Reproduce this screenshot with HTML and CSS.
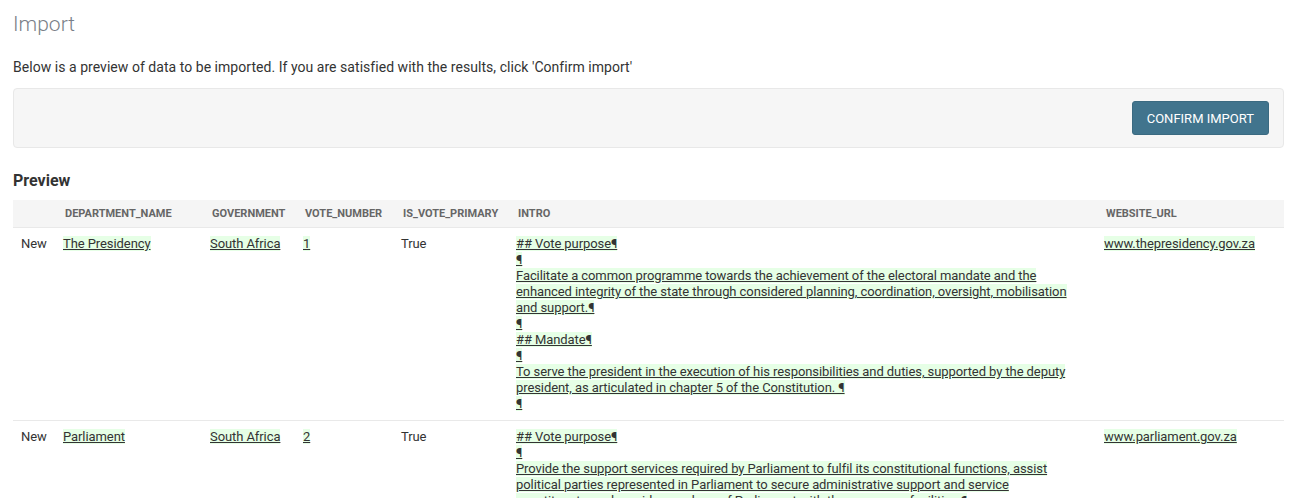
FILE: index.html
```html
<!DOCTYPE html>
<html>
<head>
<meta charset="utf-8">
<link rel="stylesheet" href="styles.css">
</head>
<body>
<div class="page">
  <h1 class="title">Import</h1>
  <p class="lead">Below is a preview of data to be imported. If you are satisfied with the results, click 'Confirm import'</p>
  <div class="well">
    <button class="btn">Confirm import</button>
  </div>
  <h3 class="section">Preview</h3>
  <table class="preview">
    <colgroup>
      <col class="c-status">
      <col class="c-dept">
      <col class="c-gov">
      <col class="c-vote">
      <col class="c-primary">
      <col class="c-intro">
      <col class="c-url">
    </colgroup>
    <thead>
      <tr>
        <th></th>
        <th>department_name</th>
        <th>government</th>
        <th>vote_number</th>
        <th>is_vote_primary</th>
        <th>intro</th>
        <th>website_url</th>
      </tr>
    </thead>
    <tbody>
      <tr>
        <td>New</td>
        <td><ins>The Presidency</ins></td>
        <td><ins>South Africa</ins></td>
        <td><ins>1</ins></td>
        <td>True</td>
        <td class="intro"><ins>## Vote purpose¶</ins><br><ins>¶</ins><br><ins>Facilitate a common programme towards the achievement of the electoral mandate and the enhanced integrity of the state through considered planning, coordination, oversight, mobilisation and support.¶</ins><br><ins>¶</ins><br><ins>## Mandate¶</ins><br><ins>¶</ins><br><ins>To serve the president in the execution of his responsibilities and duties, supported by the deputy president, as articulated in chapter 5 of the Constitution. ¶</ins><br><ins>¶</ins></td>
        <td><ins>www.thepresidency.gov.za</ins></td>
      </tr>
      <tr>
        <td>New</td>
        <td><ins>Parliament</ins></td>
        <td><ins>South Africa</ins></td>
        <td><ins>2</ins></td>
        <td>True</td>
        <td class="intro"><ins>## Vote purpose¶</ins><br><ins>¶</ins><br><ins>Provide the support services required by Parliament to fulfil its constitutional functions, assist political parties represented in Parliament to secure administrative support and service constituents, and provide members of Parliament with the necessary facilities.¶</ins><br><ins>¶</ins><br><ins>## Mandate¶</ins><br><ins>¶</ins></td>
        <td><ins>www.parliament.gov.za</ins></td>
      </tr>
    </tbody>
  </table>
</div>
</body>
</html>
```

FILE: styles.css
```css
html, body {
  margin: 0;
  padding: 0;
  background: #fff;
}

body {
  font-family: Roboto, "Liberation Sans", sans-serif;
  color: #333;
  font-size: 14px;
}

.page {
  padding: 0 12px 0 13px;
}

.title {
  margin: 13px 0 0;
  font-size: 21px;
  line-height: 22px;
  font-weight: 300;
  color: #7a7f88;
}

.lead {
  margin: 22px 0 0;
  font-size: 14px;
  line-height: 20px;
  letter-spacing: 0.04px;
  color: #333;
}

.well {
  margin-top: 11px;
  background: #f6f6f6;
  border: 1px solid #e8e8e8;
  border-radius: 4px;
  padding: 12px 14px;
  display: flex;
  justify-content: flex-end;
}

.btn {
  height: 34px;
  padding: 0 14px;
  background: #41748d;
  color: #fff;
  border: 1px solid #3b6a81;
  border-radius: 3px;
  font-family: Roboto, "Liberation Sans", sans-serif;
  font-size: 13px;
  text-transform: uppercase;
  cursor: pointer;
}

.section {
  margin: 23px 0 9px;
  font-size: 16px;
  line-height: 20px;
  font-weight: 700;
  color: #333;
}

.preview {
  width: 100%;
  table-layout: fixed;
  border-collapse: collapse;
  font-size: 13px;
}

.c-status { width: 42px; }
.c-dept { width: 147px; }
.c-gov { width: 93px; }
.c-vote { width: 98px; }
.c-primary { width: 115px; }
.c-intro { width: 588px; }
.c-url { width: 188px; }

.preview th {
  background: #f5f5f5;
  text-align: left;
  padding: 7px 8px 7px 10px;
  font-size: 11px;
  line-height: 13px;
  font-weight: 700;
  text-transform: uppercase;
  color: #666;
}

.preview td {
  vertical-align: top;
  padding: 8px;
  line-height: 16px;
  letter-spacing: -0.08px;
  border-top: 1px solid #e9e9e9;
  color: #333;
}

.preview td.intro {
  padding-right: 20px;
}

.preview ins {
  background: #e6ffe6;
  text-decoration: underline;
  color: #333;
}
```
